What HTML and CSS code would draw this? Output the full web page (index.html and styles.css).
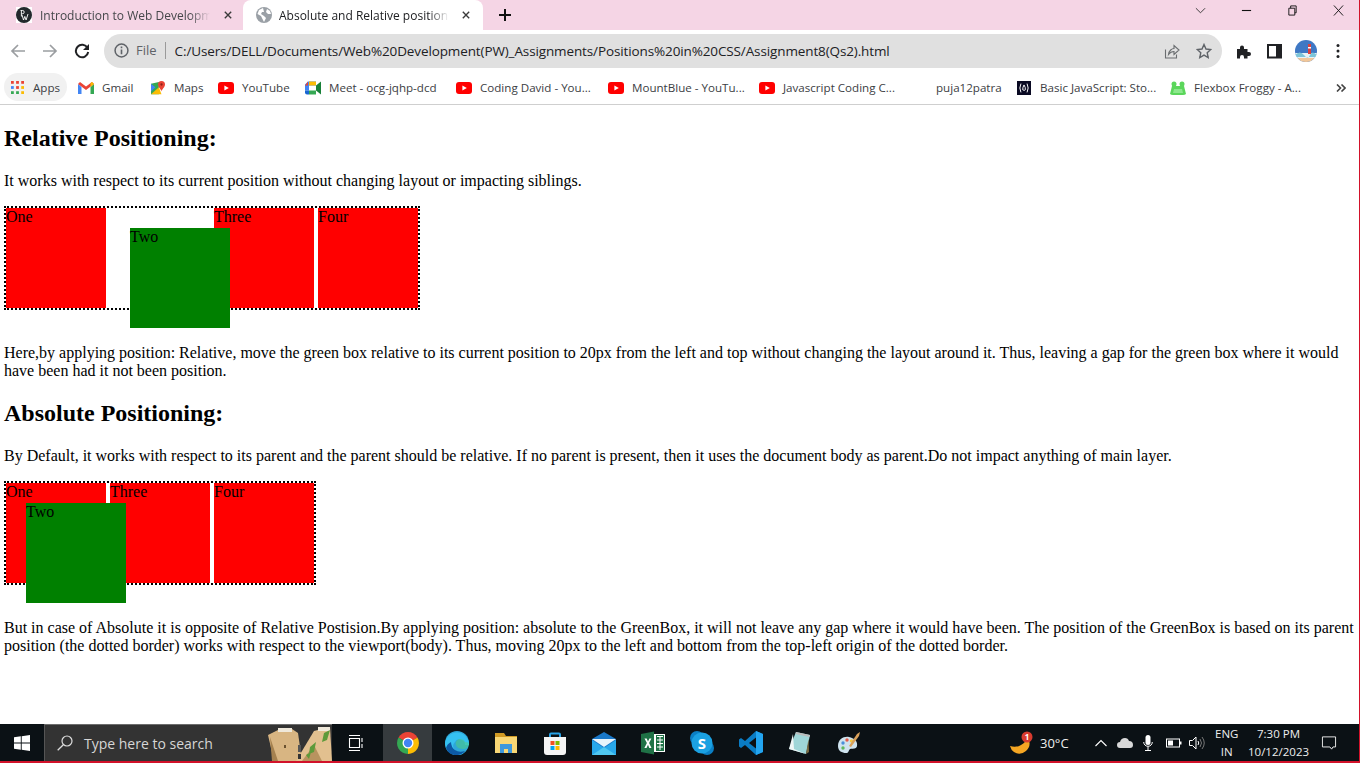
FILE: index.html
```html
<!DOCTYPE html>
<html lang="en">
<head>
  <meta charset="UTF-8">
  <meta name="viewport" content="width=device-width, initial-scale=1">
  <title>Absolute and Relative positioning</title>
  <link rel="stylesheet" href="styles.css">
</head>
<body>
  <svg class="defs" width="0" height="0">
    <symbol id="yt" viewBox="0 0 16 12"><rect width="16" height="12" rx="3" fill="#f00"/><path d="M6.4 3.4v5.2L10.8 6z" fill="#fff"/></symbol>
  </svg>

  <div class="tabstrip">
    <div class="tab">
      <svg class="favicon" viewBox="0 0 16 16"><rect width="16" height="16" fill="#fff"/><circle cx="8" cy="8" r="8" fill="#22282c"/><path d="M4.5 3.5h2.2q1.5 0 1.5 1.6T6.7 6.7H5.6M5.4 3.5v6M6 8l1.5 5 1.3-3.6 1.3 3.6L12 7" fill="none" stroke="#fff" stroke-width=".9"/></svg>
      <span class="tab-title">Introduction to Web Development</span>
      <svg class="tab-x" viewBox="0 0 10 10"><path d="M1 1l8 8M9 1l-8 8" stroke="#3a3a3a" stroke-width="1.7"/></svg>
    </div>
    <div class="tab active">
      <svg class="favicon" viewBox="0 0 16 16"><circle cx="8" cy="8" r="8" fill="#9aa0a6"/><path d="M7 1L3 3 1.500 7l3.500 2 1.500 3L8 15l2-4-2-2-3-2 1-2h2zM11 2l-1 3 2 2 3 0-1-3z" fill="#fff"/></svg>
      <span class="tab-title">Absolute and Relative positioning</span>
      <svg class="tab-x" viewBox="0 0 10 10"><path d="M1 1l8 8M9 1l-8 8" stroke="#3a3a3a" stroke-width="1.7"/></svg>
    </div>
    <svg class="new-tab" viewBox="0 0 12 12"><path d="M6 0v12M0 6h12" stroke="#111" stroke-width="2"/></svg>
    <div class="win-controls">
      <svg viewBox="0 0 12 12"><path d="M1 3.500l5 5 5-5" fill="none" stroke="#333"/></svg>
      <svg viewBox="0 0 12 12"><path d="M1 6h10" stroke="#111" stroke-width="1.200"/></svg>
      <svg viewBox="0 0 12 12"><path d="M2 3.500h6.500V11H2zM4 3.500V1h6v7.500H8.500" fill="none" stroke="#111"/></svg>
      <svg viewBox="0 0 12 12"><path d="M1 .5l10 11M11 .5l-10 11" stroke="#111"/></svg>
    </div>
  </div>

  <div class="toolbar">
    <svg class="tool" viewBox="0 0 16 16"><path d="M15 8H2M8 2L2 8l6 6" fill="none" stroke="#9b9ea1" stroke-width="1.700"/></svg>
    <svg class="tool" viewBox="0 0 16 16"><path d="M1 8h13M8 2l6 6-6 6" fill="none" stroke="#9b9ea1" stroke-width="1.700"/></svg>
    <svg class="tool" viewBox="0 0 16 16"><path d="M13.500 5A6.200 6.200 0 1 0 14.200 9" fill="none" stroke="#202124" stroke-width="2"/><path d="M15 1v6H9z" fill="#202124"/></svg>
    <div class="omnibox">
      <svg class="info" viewBox="0 0 14 14"><circle cx="7" cy="7" r="6" fill="none" stroke="#5f6368" stroke-width="1.400"/><path d="M7 6v4.500M7 3.200v1.600" stroke="#5f6368" stroke-width="1.500"/></svg>
      <span class="scheme">File</span>
      <span class="url">C:/Users/DELL/Documents/Web%20Development(PW)_Assignments/Positions%20in%20CSS/Assignment8(Qs2).html</span>
      <svg class="omni-icon" viewBox="0 0 16 16"><path d="M1.500 6.500V15h11v-3.500M4.500 11.500C5 7.500 8 5.500 10 5.500V2.500l5 4.500-5 4.500V8.500c-2.500 0-4 1-5.500 3z" fill="none" stroke="#6a6d70" stroke-width="1.100"/></svg>
      <svg class="omni-icon" viewBox="0 0 16 16"><path d="M8 1.500l2 4.500 4.800.5-3.600 3.200 1 4.800L8 12.100l-4.200 2.400 1-4.800L1.200 6.500 6 6z" fill="none" stroke="#5f6368" stroke-width="1.400"/></svg>
    </div>
    <svg class="ext" viewBox="0 0 16 16"><path d="M1 6h3V4.500a2 2 0 0 1 4 0V6h3.500v3H13a2 2 0 0 1 0 4h-1.500v2.500H8v-1.500a2 2 0 0 0-4 0v1.500H1z" fill="#202124"/></svg>
    <svg class="ext" viewBox="0 0 16 16"><path d="M2 2h13v12.500H2z" fill="none" stroke="#202124" stroke-width="2"/><path d="M10 2h5v12.500h-5z" fill="#202124"/></svg>
    <svg class="avatar" viewBox="0 0 22 22"><clipPath id="round"><circle cx="11" cy="11" r="11"/></clipPath><g clip-path="url(#round)"><rect width="22" height="22" fill="#3f78c4"/><rect y="13" width="22" height="5" fill="#e9f3f6"/><rect y="18" width="22" height="4" fill="#f1c79a"/><path d="M0 15q5-5 9 0t6 0 7 0v2H0z" fill="#7cc4d8"/><rect x="13" y="4" width="3" height="10" fill="#d9413f"/><rect x="13" y="7" width="3" height="1.500" fill="#fff"/></g></svg>
    <svg class="ext kebab" viewBox="0 0 4 16"><circle cx="2" cy="2.500" r="1.500" fill="#202124"/><circle cx="2" cy="8" r="1.500" fill="#202124"/><circle cx="2" cy="13.500" r="1.500" fill="#202124"/></svg>
  </div>

  <div class="bookmarks">
    <div class="bm"><div class="bm-pill">
      <svg class="bm-icon" viewBox="0 0 14 14"><g fill="#ea4335"><rect width="3" height="3"/><rect x="5.500" width="3" height="3"/><rect x="11" width="3" height="3"/></g><g fill="#4285f4"><rect y="5.500" width="3" height="3"/><rect x="5.500" y="5.500" width="3" height="3" fill="#ea4335"/><rect x="11" y="5.500" width="3" height="3" fill="#fbbc04"/></g><g fill="#34a853"><rect y="11" width="3" height="3"/><rect x="5.500" y="11" width="3" height="3"/><rect x="11" y="11" width="3" height="3" fill="#fbbc04"/></g></svg>
      <span>Apps</span></div></div>
    <div class="bm">
      <svg class="bm-icon" viewBox="0 0 16 12"><path d="M0 2v10h3.500V5z" fill="#4285f4"/><path d="M16 2v10h-3.500V5z" fill="#34a853"/><path d="M0 2l2-2 6 4.500L14 0l2 2-8 6z" fill="#ea4335"/><path d="M12.500 1.100L14 0l2 2-3.500 3z" fill="#fbbc04"/></svg>
      <span>Gmail</span></div>
    <div class="bm">
      <svg class="bm-icon" viewBox="0 0 16 16"><path d="M0 3l9-2v14l-9 0z" fill="#34a853"/><path d="M0 15L9 7l3 8z" fill="#fbbc04"/><path d="M0 3l5 4-5 5z" fill="#4285f4"/><path d="M12 0a4 4 0 0 1 4 4c0 3-4 6-4 8-0-2-4-5-4-8a4 4 0 0 1 4-4z" fill="#ea4335"/><circle cx="12" cy="4" r="1.300" fill="#8c1f16"/></svg>
      <span>Maps</span></div>
    <div class="bm"><svg class="bm-icon"><use href="#yt"/></svg><span>YouTube</span></div>
    <div class="bm">
      <svg class="bm-icon" viewBox="0 0 16 13"><path d="M3 0h8v4H4v5H0V3z" fill="#4285f4"/><path d="M0 9h4v4H2a2 2 0 0 1-2-2z" fill="#1967d2"/><path d="M4 9h7v4H4z" fill="#34a853"/><path d="M4 0h7v4H4z" fill="#fbbc04"/><path d="M3 0v4H0z" fill="#ea4335"/><path d="M11 4v5l5 4V0z" fill="#188038"/></svg>
      <span>Meet - ocg-jqhp-dcd</span></div>
    <div class="bm"><svg class="bm-icon"><use href="#yt"/></svg><span>Coding David - You...</span></div>
    <div class="bm"><svg class="bm-icon"><use href="#yt"/></svg><span>MountBlue - YouTu...</span></div>
    <div class="bm"><svg class="bm-icon"><use href="#yt"/></svg><span>Javascript Coding C...</span></div>
    <div class="bm"><i class="bm-icon"></i><span>puja12patra</span></div>
    <div class="bm">
      <svg class="bm-icon" viewBox="0 0 16 16"><rect width="16" height="16" fill="#0a0a23"/><path d="M4.500 3Q2 8 4.500 13M11.500 3q2.500 5 0 10M8 4.500q2 3 1.500 5.500-1 1.500-3 0Q6.500 7 8 4.500z" fill="none" stroke="#fff" stroke-width="1.100"/></svg>
      <span>Basic JavaScript: Sto...</span></div>
    <div class="bm">
      <svg class="bm-icon" viewBox="0 0 16 14"><circle cx="4" cy="3" r="2.500" fill="#5bd65b"/><circle cx="12" cy="3" r="2.500" fill="#5bd65b"/><path d="M2 5h12l2 8q-1 1-3 1H3q-2 0-3-1z" fill="#5bd65b"/><path d="M4 8h8l1 4H3z" fill="#8ce88c"/></svg>
      <span>Flexbox Froggy - A...</span></div>
    <svg class="bm-more" viewBox="0 0 10 8"><path d="M1 .5L4.500 4 1 7.500M5.500 .5L9 4 5.500 7.500" fill="none" stroke="#444" stroke-width="1.600"/></svg>
  </div>

  <main class="page">
    <h2>Relative Positioning:</h2>
    <p>It works with respect to its current position without changing layout or impacting siblings.</p>
    <div class="parent">
      <div class="box">One</div>
      <div class="box two-relative">Two</div>
      <div class="box">Three</div>
      <div class="box">Four</div>
    </div>
    <p>Here,by applying position: Relative, move the green box relative to its current position to 20px from the left and top without changing the layout around it. Thus, leaving a gap for the green box where it would have been had it not been position.</p>

    <h2>Absolute Positioning:</h2>
    <p>By Default, it works with respect to its parent and the parent should be relative. If no parent is present, then it uses the document body as parent.Do not impact anything of main layer.</p>
    <div class="parent">
      <div class="box">One</div>
      <div class="box two-absolute">Two</div>
      <div class="box">Three</div>
      <div class="box">Four</div>
    </div>
    <p>But in case of Absolute it is opposite of Relative Postision.By applying position: absolute to the GreenBox, it will not leave any gap where it would have been. The position of the GreenBox is based on its parent position (the dotted border) works with respect to the viewport(body). Thus, moving 20px to the left and bottom from the top-left origin of the dotted border.</p>
  </main>

  <footer class="taskbar">
    <div class="start">
      <svg viewBox="0 0 16 16"><path d="M0 2.300l6.800-1v6.300H0zM7.700 1.200L16 0v7.600H7.700zM0 8.400h6.800v6.300l-6.800-1zM7.700 8.400H16V16l-8.300-1.200z" fill="#fff"/></svg>
    </div>
    <div class="search">
      <svg class="search-icon" viewBox="0 0 16 16"><circle cx="10" cy="6" r="5" fill="none" stroke="#ddd" stroke-width="1.200"/><path d="M6.300 9.700L.7 15.300" stroke="#ddd" stroke-width="1.300"/></svg>
      <span>Type here to search</span>
      <svg class="search-art" viewBox="0 0 66 36"><path d="M2 10l10-5 14-1 6 4 4 28H8z" fill="#d8b582"/><path d="M4 12l8 24H6z" fill="#a5814f"/><path d="M48 6l16-4 2 34H30z" fill="#e2c08f"/><path d="M36 36l12-16 8 16z" fill="#b8935f"/><path d="M12 3h14v4H12zM52 2h12v4H52z" fill="#efe8da"/><path d="M58 8l6-3-3 10-5 2zM44 22l6-5-2 10-5 2zM40 30l5-3-2 7z" fill="#5d9a3a"/><rect x="32" y="20" width="3" height="7" fill="#555"/><rect x="32" y="29" width="3" height="5" fill="#333"/><rect x="18" y="20" width="2" height="3" fill="#6b5230"/></svg>
    </div>
    <div class="task-view">
      <svg viewBox="0 0 16 16"><path d="M1 .5h11M1 15.500h11M1.500 3.500h10v9h-10zM14 3v4M14 9v4" fill="none" stroke="#fff" stroke-width="1.100"/></svg>
    </div>
    <div class="app running">
      <svg viewBox="0 0 24 24"><path d="M12 12L2.500 6.500A11 11 0 0 1 21.500 6.500z" fill="#ea4335"/><path d="M12 12l9.500-5.500A11 11 0 0 1 12 23z" fill="#fbbc04"/><path d="M12 12v11A11 11 0 0 1 2.500 6.500z" fill="#34a853"/><circle cx="12" cy="12" r="5.500" fill="#fff"/><circle cx="12" cy="12" r="4.200" fill="#4285f4"/></svg>
    </div>
    <div class="app">
      <svg viewBox="0 0 24 24"><circle cx="12" cy="12" r="12" fill="#2ea7d8"/><path d="M0 13a12 12 0 0 0 21 7q-7 3-11-1T10 11q2-4 7-2 3 1 3 5h4A12 12 0 0 0 0 13z" fill="#35c1f1"/><path d="M24 13c0 3-3 5-6 5s-6-1-7-4 1-5 3-6q5 0 6 3 4 0 4 2z" fill="#4fcf7a" opacity=".5"/><path d="M1 17q3 8 12 7 5-1 7-4-6 2-10-1t-4-8q-4 2-5 6z" fill="#0c59a4"/></svg>
    </div>
    <div class="app">
      <svg viewBox="0 0 24 24"><path d="M1 2h9l2 3h11v2H1z" fill="#d09a24"/><path d="M1 6h22v16H1z" fill="#f8d775"/><path d="M6 22v-9h12v9h-4v-4h-4v4z" fill="#3d98dd"/></svg>
    </div>
    <div class="app">
      <svg viewBox="0 0 24 24"><path d="M7 7V3.500a1 1 0 0 1 1-1h8a1 1 0 0 1 1 1V7" fill="none" stroke="#29a3e8" stroke-width="2"/><path d="M1 6h22v15a3 3 0 0 1-3 3H4a3 3 0 0 1-3-3z" fill="#f5f5f5"/><rect x="7.500" y="10" width="4" height="4" fill="#f25022"/><rect x="12.500" y="10" width="4" height="4" fill="#7fba00"/><rect x="7.500" y="15" width="4" height="4" fill="#00a4ef"/><rect x="12.500" y="15" width="4" height="4" fill="#ffb900"/></svg>
    </div>
    <div class="app">
      <svg viewBox="0 0 24 24"><path d="M0 8l12-7 12 7v16H0z" fill="#1a78c8"/><path d="M0 8h24l-12 8z" fill="#e8f4fb"/><path d="M0 9l12 8 12-8v15H0z" fill="#28a8ea"/><path d="M0 24l12-8 12 8z" fill="#50c8f0"/></svg>
    </div>
    <div class="app">
      <svg viewBox="0 0 24 24"><path d="M10 3h14v18H10z" fill="#fff"/><path d="M15 4h8v16h-8z" fill="#1f7246"/><path d="M16 5.500h6M16 9h6M16 12.500h6M16 16h6M19 5v14" stroke="#fff"/><path d="M0 3l13-2.500v23L0 21z" fill="#1f7246"/><path d="M3.500 7.500h2.200L7 10.500l1.400-3h2l-2.300 4.500 2.400 5H8.300L7 13.800 5.500 17H3.400l2.500-5z" fill="#fff"/></svg>
    </div>
    <div class="app">
      <svg viewBox="0 0 24 24"><circle cx="7" cy="7" r="7" fill="#0b7fc4"/><circle cx="17" cy="17" r="7" fill="#0b7fc4"/><circle cx="12" cy="12" r="10.500" fill="#1ba1e2"/><text x="12" y="17.500" class="skype-s">S</text></svg>
    </div>
    <div class="app">
      <svg viewBox="0 0 24 24"><path d="M17 0l7 3v18l-7 3L6 14l-4 3-2-1.500v-7L2 7l4 3z" fill="#0a7cc4"/><path d="M17 0l7 3v18l-7 3z" fill="#23a5f0"/><path d="M17 6.500L10 12l7 5.500z" fill="#0d0f12"/></svg>
    </div>
    <div class="app">
      <svg viewBox="0 0 24 24"><path d="M8 1l14 3-4 19L1 18z" fill="#9fd6d8"/><path d="M1 18l4-15 1 15 12 5z" fill="#eef6f6"/><path d="M8 1l14 3-.5 2L7.500 3z" fill="#bbb"/><path d="M20.500 8L18 23l3-2z" fill="#7a6a40"/></svg>
    </div>
    <div class="app">
      <svg viewBox="0 0 24 24"><path d="M1 15C1 8 7 5 12 6s9 4 8 9c-1 4-5 2-7 3-2 2-1 4-4 4-4 0-8-2-8-7z" fill="#cfe3ee"/><circle cx="6" cy="12" r="1.700" fill="#4a90d9"/><circle cx="10" cy="9" r="1.700" fill="#e25c4a"/><circle cx="14.500" cy="10" r="1.700" fill="#f2c744"/><circle cx="6" cy="17" r="1.700" fill="#5fb85f"/><path d="M12 15L20 3l3-2-1 4-8 11z" fill="#d9a15b"/></svg>
    </div>

    <div class="tray">
      <svg class="weather" viewBox="0 0 24 24"><path d="M1 15q6 2 11-1t7-8q4 9-2 14T5 21q-3-2-4-6z" fill="#f5a623"/><circle cx="18" cy="6" r="5.500" fill="#d83b2f"/><text x="18" y="8.800" class="badge-num">1</text></svg>
      <span class="temp">30°C</span>
      <svg class="tray-icon" viewBox="0 0 12 8"><path d="M.5 7L6 1.500 11.500 7" fill="none" stroke="#fff" stroke-width="1.100"/></svg>
      <svg class="tray-icon" viewBox="0 0 16 10"><path d="M3 10a3 3 0 0 1 0-6q1-4 5-4 3 0 4 3 4 0 4 4 0 3-3 3z" fill="#d8d8d8"/></svg>
      <svg class="tray-icon" viewBox="0 0 10 16"><rect x="2.500" y="0" width="5" height="10" rx="2.500" fill="#fff"/><path d="M.7 7a4.300 4.300 0 0 0 8.600 0M5 11.500V15M2 15.500h6" fill="none" stroke="#fff"/></svg>
      <svg class="tray-icon" viewBox="0 0 16 10"><rect x=".5" y="1" width="13" height="8" fill="none" stroke="#fff"/><rect x="2" y="2.500" width="5" height="5" fill="#fff"/><rect x="14" y="3.500" width="1.500" height="3" fill="#fff"/></svg>
      <svg class="tray-icon" viewBox="0 0 16 14"><path d="M.5 4.500h3L7 1v12L3.500 9.500h-3z" fill="none" stroke="#fff"/><path d="M9 5q1.500 2 0 4" fill="none" stroke="#fff"/><path d="M11 3q3 4 0 8M13 1q4.500 6 0 12" fill="none" stroke="#777"/></svg>
      <div class="lang">ENG<br>IN</div>
      <div class="clock">7:30 PM<br>10/12/2023</div>
      <svg class="tray-icon" viewBox="0 0 16 16"><path d="M.5 1h15v11.500h-3L11 15l-2-2.500H.5z" fill="none" stroke="#fff"/></svg>
    </div>
  </footer>
</body>
</html>
```

FILE: styles.css
```css
* { box-sizing: border-box; }
html, body { height: 100%; }
body {
  margin: 0;
  display: flex;
  flex-direction: column;
  height: 100vh;
  overflow: hidden;
  background: #fff;
  color: #000;
  font-family: "Liberation Serif", "Times New Roman", serif;
  border-right: 1px solid #d2122a;
}
.defs { position: absolute; }

/* browser chrome */
.tabstrip {
  height: 30px;
  flex: none;
  display: flex;
  align-items: center;
  background: #f5d5e5;
  font: 12px "Open Sans", sans-serif;
  color: #45474a;
}
.tab {
  width: 243px;
  height: 30px;
  display: flex;
  align-items: center;
  padding-left: 16px;
  border-bottom-right-radius: 8px;
}
.tab.active {
  width: 240px;
  padding-left: 13px;
  background: #fff;
  color: #202124;
  border-radius: 8px 8px 0 0;
}
.favicon { width: 16px; height: 16px; flex: none; }
.tab-title {
  width: 170px;
  margin-left: 8px;
  white-space: nowrap;
  overflow: hidden;
  -webkit-mask-image: linear-gradient(to right, #000 88%, transparent);
  mask-image: linear-gradient(to right, #000 88%, transparent);
}
.tab.active .tab-title { margin-left: 7px; }
.tab-x { width: 8px; height: 8px; margin-left: 14px; flex: none; }
.tab.active .tab-x { margin-left: 13px; }
.new-tab { width: 12px; height: 12px; margin-left: 16px; }
.win-controls {
  margin-left: auto;
  display: grid;
  grid-template-columns: repeat(4, 46px);
  justify-items: center;
  margin-top: -10px;
  margin-right: -2px;
}
.win-controls svg { width: 11px; height: 11px; }

.toolbar {
  height: 41px;
  flex: none;
  display: flex;
  align-items: center;
  padding-left: 10px;
  background: #fff;
}
.tool { width: 16px; height: 16px; margin-right: 16px; flex: none; }
.omnibox {
  width: 1118px;
  height: 34px;
  margin-left: -2px;
  display: flex;
  align-items: center;
  padding-left: 10px;
  background: #e0e0e0;
  border-radius: 17px;
  font: 13.5px "Open Sans", sans-serif;
  color: #202124;
}
.info { width: 15px; height: 15px; flex: none; }
.scheme {
  margin-left: 7px;
  padding-right: 8px;
  border-right: 1px solid #9a9a9a;
  line-height: 17px;
  font-size: 13px;
  color: #5f6368;
}
.url { margin-left: 9px; white-space: nowrap; letter-spacing: -.12px; }
.omni-icon { width: 16px; height: 16px; flex: none; margin-left: 16px; }
.omni-icon:nth-of-type(2) { margin-left: auto; }
.omni-icon:last-child { margin-right: 10px; }
.ext { width: 16px; height: 16px; flex: none; margin-left: 14px; }
.ext:nth-of-type(1) { margin-left: 14px; }
.avatar { width: 22px; height: 22px; flex: none; margin-left: 13px; }
.kebab { width: 4px; margin-left: 19px; }

.bookmarks {
  height: 34px;
  flex: none;
  display: grid;
  grid-template-columns: 74px 72px 68px 87px 151px 152px 151px 153px 104px 154px 165px 1fr;
  align-items: center;
  padding-left: 4px;
  background: #fff;
  border-bottom: 1px solid #cfcfcf;
  font: 11.6px "Open Sans", sans-serif;
  color: #3c4043;
}
.bm { display: flex; align-items: center; gap: 8px; white-space: nowrap; }
.bm-pill {
  width: 63px;
  height: 28px;
  display: flex;
  align-items: center;
  gap: 9px;
  padding-left: 7px;
  margin-bottom: 1px;
  background: #f1f1f1;
  border-radius: 14px;
}
.bm-pill .bm-icon { width: 13px; height: 13px; }
.bm-icon { width: 16px; height: 14px; flex: none; display: block; }
.bm-more { width: 10px; height: 8px; margin-left: 1px; }

/* page */
.page {
  flex: 1;
  min-height: 0;
  padding: 0 4px;
  font-size: 16px;
}
h2 { margin: 19.92px 0; font-size: 24px; }
p { margin: 16px 0; }
.parent {
  position: relative;
  display: flex;
  gap: 4px;
  width: max-content;
  margin-bottom: 34px;
  border: 2px dotted #000;
}
.box { width: 100px; height: 100px; background: #f00; }
.two-relative {
  position: relative;
  left: 20px;
  top: 20px;
  background: #008000;
}
.two-absolute {
  position: absolute;
  left: 20px;
  top: 20px;
  background: #008000;
}

/* windows taskbar */
.taskbar {
  height: 39px;
  flex: none;
  display: flex;
  background: #0b1115;
  border-bottom: 2px solid #d2122a;
  color: #fff;
  font: 12px "Open Sans", sans-serif;
}
.start { width: 44px; display: flex; align-items: center; justify-content: center; }
.start svg { width: 16px; height: 16px; }
.search {
  width: 288px;
  display: flex;
  align-items: center;
  background: #333;
  border-top: 1px solid #6d6d6d;
  border-left: 1px solid #555;
  font-size: 14px;
  color: #d6d6d6;
}
.search-icon { width: 16px; height: 16px; margin-left: 12px; flex: none; }
.search > span { margin-left: 11px; }
.search-art { width: 66px; height: 36px; margin-left: auto; flex: none; }
.task-view { width: 51px; display: flex; align-items: center; justify-content: center; padding-right: 4px; }
.task-view svg { width: 16px; height: 16px; }
.app { width: 49px; display: flex; align-items: center; justify-content: center; }
.app svg { width: 24px; height: 24px; }
.app.running { background: #363b3e; }
.skype-s { font: bold 15px "Open Sans", sans-serif; fill: #fff; text-anchor: middle; }
.badge-num { font: bold 8px "Open Sans", sans-serif; fill: #fff; text-anchor: middle; }
.tray {
  margin-left: auto;
  display: grid;
  grid-template-columns: 31px 55px 22px 26px 23px 23px 26px 33px 73px 38px;
  align-items: center;
  justify-items: start;
  width: 350px;
}
.weather { width: 24px; height: 24px; }
.temp { font-size: 13px; color: #eee; }
.tray-icon { width: 16px; height: 14px; }
.tray-icon:nth-of-type(2) { width: 12px; height: 8px; }
.tray-icon:nth-of-type(4) { width: 10px; height: 16px; }
.lang, .clock { font-size: 11.5px; line-height: 18px; text-align: center; color: #eee; }
.clock { white-space: nowrap; }
```
